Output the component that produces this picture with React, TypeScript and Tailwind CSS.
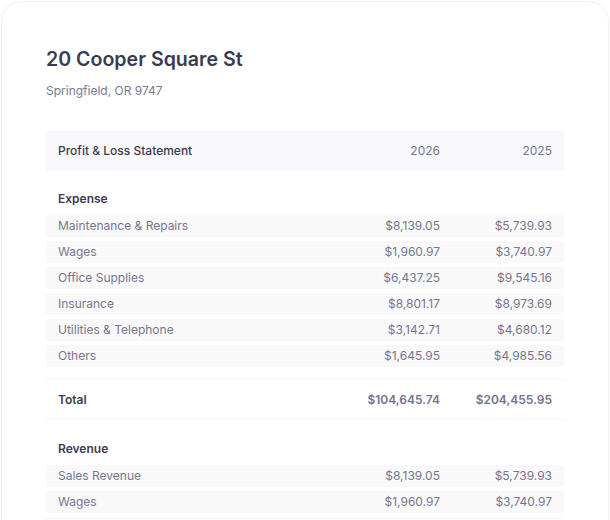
const expenses = [
  { label: 'Maintenance & Repairs', a: '$8,139.05', b: '$5,739.93' },
  { label: 'Wages', a: '$1,960.97', b: '$3,740.97' },
  { label: 'Office Supplies', a: '$6,437.25', b: '$9,545.16' },
  { label: 'Insurance', a: '$8,801.17', b: '$8,973.69' },
  { label: 'Utilities & Telephone', a: '$3,142.71', b: '$4,680.12' },
  { label: 'Others', a: '$1,645.95', b: '$4,985.56' },
];

const revenue = [
  { label: 'Sales Revenue', a: '$8,139.05', b: '$5,739.93' },
  { label: 'Wages', a: '$1,960.97', b: '$3,740.97' },
  { label: 'Others', a: '$6,437.25', b: '$9,545.16' },
];

type Line = { label: string; a: string; b: string };

function Row({ line }: { line: Line }) {
  return (
    <div className="flex h-[22px] items-center bg-[#f9f9fa] text-[12px] text-[#76768f]">
      <div className="flex-1 px-3">{line.label}</div>
      <div className="w-[112px] px-3 text-right">{line.a}</div>
      <div className="w-[112px] px-3 text-right">{line.b}</div>
    </div>
  );
}

function Section({ title, lines }: { title: string; lines: Line[] }) {
  return (
    <div className="flex flex-col">
      <div className="flex h-8 items-center px-3 text-[12px] font-semibold text-[#3b3b52]">{title}</div>
      <div className="flex flex-col gap-1">
        {lines.map((l, i) => (
          <Row key={i} line={l} />
        ))}
      </div>
    </div>
  );
}

export default function App() {
  return (
    <div
      className="h-[520px] overflow-hidden bg-white px-[1px] pt-[1px]"
      style={{ fontFamily: 'Inter, "Noto Sans", sans-serif' }}
    >
      <div className="h-[560px] rounded-[20px] border border-[#f2f2f5] bg-white px-[44px] pt-[43px]">
        <h1 className="text-[19.6px] font-semibold leading-7 text-[#3b3b52]">20 Cooper Square St</h1>
        <p className="mt-[9px] text-[12px] text-[#7a7a94]">Springfield, OR 9747</p>

        <div className="mt-[31px] flex flex-col">
          <div className="flex h-10 items-center bg-[#f8f8fd] text-[12px]">
            <div className="flex-1 px-3 font-medium text-[#3b3b52]">Profit &amp; Loss Statement</div>
            <div className="w-[112px] px-3 text-right text-[#76768f]">2026</div>
            <div className="w-[112px] px-3 text-right text-[#76768f]">2025</div>
          </div>

          <div className="mt-3">
            <Section title="Expense" lines={expenses} />
          </div>

          <div className="mt-3 flex h-[41px] items-center border-y border-[#f4f4f8] text-[12px] font-semibold">
            <div className="flex-1 px-3 text-[#3b3b52]">Total</div>
            <div className="w-[112px] px-3 text-right text-[#74748c]">$104,645.74</div>
            <div className="w-[112px] px-3 text-right text-[#74748c]">$204,455.95</div>
          </div>

          <div className="mt-[13px]">
            <Section title="Revenue" lines={revenue} />
          </div>
        </div>
      </div>
    </div>
  );
}
